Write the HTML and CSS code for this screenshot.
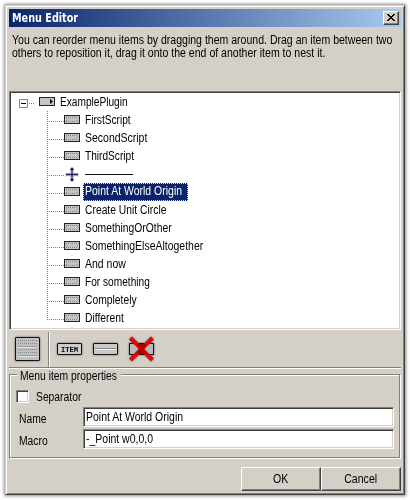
FILE: index.html
```
<!DOCTYPE html>
<html lang="en">
<head>
<meta charset="utf-8">
<title>Menu Editor</title>
<link rel="stylesheet" href="styles.css">
</head>
<body>
<svg class="defs" width="0" height="0" aria-hidden="true">
  <symbol id="item" viewBox="0 0 16 9"><rect x=".5" y=".5" width="15" height="8" fill="#c4c4c4" stroke="#222"/><path d="M2 2.5H14M2 6.5H14" stroke="#858585" stroke-dasharray="1 1"/><path d="M2.5 3V6M13.5 3V6" stroke="#999" stroke-dasharray="1 1"/></symbol>
</svg>
<main class="window">
  <header class="titlebar">
    <h1>Menu Editor</h1>
    <button class="close" aria-label="Close"><svg width="8" height="7" viewBox="0 0 8 7" shape-rendering="crispEdges"><path d="M0 0h2v1h1v1h2V1h1V0h2v1H7v1H6v1H5v1h1v1h1v1h1v1H6V6H5V5H3v1H2v1H0V6h1V5h1V4h1V3H2V2H1V1H0z"/></svg></button>
  </header>
  <div class="intro"><p class="text line1">You can reorder menu items by dragging them around. Drag an item between two</p><p class="text line2">others to reposition it, drag it onto the end of another item to nest it.</p></div>
  <section class="tree">
    <div class="root"><svg class="expander" width="9" height="9"><path d="M.5.5h8v8h-8z" fill="#fff" stroke="#808080"/><path d="M2 4.5h5" stroke="#000"/></svg><span class="stub"></span><svg class="icon" width="16" height="9"><rect x=".5" y=".5" width="15" height="8" fill="#c4c4c4" stroke="#222"/><path d="M11 2l3 2.5L11 7z"/></svg><span class="label"><span class="text tight">ExamplePlugin</span></span></div>
    <ul>
      <li><svg class="icon" width="16" height="9"><use href="#item"/></svg><span class="label"><span class="text tight">FirstScript</span></span></li>
      <li><svg class="icon" width="16" height="9"><use href="#item"/></svg><span class="label"><span class="text wide">SecondScript</span></span></li>
      <li><svg class="icon" width="16" height="9"><use href="#item"/></svg><span class="label"><span class="text tight">ThirdScript</span></span></li>
      <li><svg class="icon" width="16" height="16"><path d="M1 8.500h14M8 2v13" stroke="#b8b8ef" stroke-width="4" opacity=".55"/><path d="M2 8.500h12" stroke="#14144c" stroke-width="1.500"/><path d="M8 2v13" stroke="#14144c" stroke-width="1.200"/><path d="M8 1L6 4h4zM8 16l-2-3h4z" fill="#14144c"/></svg><span class="rule"></span></li>
      <li><svg class="icon" width="16" height="9"><use href="#item"/></svg><span class="label selected"><span class="text wide">Point At World Origin</span></span></li>
      <li><svg class="icon" width="16" height="9"><use href="#item"/></svg><span class="label"><span class="text">Create Unit Circle</span></span></li>
      <li><svg class="icon" width="16" height="9"><use href="#item"/></svg><span class="label"><span class="text">SomethingOrOther</span></span></li>
      <li><svg class="icon" width="16" height="9"><use href="#item"/></svg><span class="label"><span class="text wide">SomethingElseAltogether</span></span></li>
      <li><svg class="icon" width="16" height="9"><use href="#item"/></svg><span class="label"><span class="text wide">And now</span></span></li>
      <li><svg class="icon" width="16" height="9"><use href="#item"/></svg><span class="label"><span class="text tight">For something</span></span></li>
      <li><svg class="icon" width="16" height="9"><use href="#item"/></svg><span class="label"><span class="text">Completely</span></span></li>
      <li><svg class="icon" width="16" height="9"><use href="#item"/></svg><span class="label"><span class="text">Different</span></span></li>
    </ul>
  </section>
  <nav class="toolbar">
    <svg class="tool" width="25" height="24"><rect x=".5" y=".5" width="24" height="23" rx=".5" fill="#c0c0c0" stroke="#111"/><path d="M3 3.500h19M3 6.500h19M3 12.500h19M3 15.500h19" stroke="#888" stroke-dasharray="1 1"/><path d="M3 10.500h19M3 19.500h19" stroke="#e4e4e4"/><path d="M3 9.500h19M3 18.500h19" stroke="#999"/></svg>
    <span class="divider"></span>
    <svg class="tool" width="25" height="12"><rect x=".5" y=".5" width="24" height="11" rx=".5" fill="#ccc" stroke="#111"/><text x="4" y="8.500" textLength="17" lengthAdjust="spacingAndGlyphs" class="item-text">ITEM</text></svg>
    <svg class="tool" width="25" height="12"><rect x=".5" y=".5" width="24" height="11" rx=".5" fill="#c8c8c8" stroke="#111"/><path d="M2 5.500h21" stroke="#888"/><path d="M2 6.500h21" stroke="#eee"/></svg>
    <svg class="tool" width="27" height="26"><rect x="1.500" y="7.500" width="24" height="11" fill="#b8b8b8" stroke="#111"/><path d="M2.500 2L24.500 24M24.500 2L2.500 24" stroke="#e00909" stroke-width="4"/><path d="M8 8h11l-3 5 3 5H8l3-5z" fill="#b50000"/></svg>
  </nav>
  <fieldset>
    <legend><span class="text">Menu item properties</span></legend>
    <label class="check"><span class="box"></span><span class="text">Separator</span></label>
    <div class="field"><label><span class="text">Name</span></label><div class="input"><span class="text wide">Point At World Origin</span></div></div>
    <div class="field"><label><span class="text">Macro</span></label><div class="input"><span class="text wide">-_Point w0,0,0</span></div></div>
  </fieldset>
  <footer><button><span class="text centered">OK</span></button><button><span class="text centered">Cancel</span></button></footer>
</main>
</body>
</html>
```
FILE: styles.css
```
* { box-sizing: border-box; }
body { margin: 0; padding: 5px; height: 500px; overflow: hidden; background: #fff; color: #000; font: 12px/14px "Liberation Sans", Arial, sans-serif; }
.defs { position: absolute; }
h1, p, ul { margin: 0; padding: 0; }
svg { display: block; flex: none; }
.text { display: inline-block; white-space: nowrap; transform: scaleX(.86); transform-origin: 0 50%; }
.tight { transform: scaleX(.845); }
.wide { transform: scaleX(.873); }
.centered { transform: scaleX(.88); transform-origin: 50% 50%; }
.window { width: 400px; height: 490px; padding: 3px; background: #d4d0c8; border: 1px solid; border-color: #d4d0c8 #404040 #404040 #d4d0c8; box-shadow: inset 1px 1px #fff, inset -1px -1px #808080, 0 0 3px 1px #888; display: flex; flex-direction: column; }
.titlebar { height: 18px; flex: none; display: flex; align-items: center; justify-content: space-between; padding: 0 2px 0 3px; background: linear-gradient(90deg, #0a246a, #a6caf0); color: #fff; }
h1 { font: bold 12px/16px "DejaVu Sans", sans-serif; transform: scaleX(.805); transform-origin: 0 50%; }
button { font: inherit; color: #000; padding: 0; background: #d4d0c8; border: 1px solid; border-color: #fff #404040 #404040 #fff; box-shadow: inset -1px -1px #808080; display: flex; align-items: center; justify-content: center; }
.close { width: 16px; height: 14px; padding: 0 1px 1px 0; }
.intro { height: 64px; flex: none; padding: 7px 3px; line-height: 13px; }
.intro .text { display: block; width: max-content; transform: scaleX(.878); }
.tree { height: 239px; flex: none; background: #fff; border: 1px solid; border-color: #808080 #fff #fff #808080; box-shadow: inset 1px 1px #404040, inset -1px -1px #d4d0c8; padding: 1px; white-space: nowrap; }
.root, li { height: 18px; display: flex; align-items: center; }
.root { padding-left: 8px; }
.expander { margin-top: 2px; }
.stub { width: 5px; margin: 2px 5px 0 1px; border-top: 1px dotted #808080; }
.icon { margin-right: 3px; margin-bottom: 1px; }
.label { height: 16px; line-height: 16px; padding: 0 2px; }
ul { list-style: none; margin-left: 36px; background: repeating-linear-gradient(#808080 0 1px, transparent 1px 2px) 0 0 / 1px 209px no-repeat; }
li::before { content: ""; width: 17px; height: 1px; margin-top: 2px; background: repeating-linear-gradient(90deg, #808080 0 1px, transparent 1px 2px); }
.rule { width: 48px; height: 1px; background: #111; margin-left: 2px; }
.selected { width: 105px; height: 18px; line-height: 17px; background: #0a246a; color: #fff; outline: 1px dotted #f5db95; outline-offset: -1px; }
.toolbar { height: 40px; flex: none; display: flex; align-items: center; margin-top: -1px; padding: 0 6px; border-bottom: 1px solid #fff; box-shadow: inset 0 -1px #808080; }
.tool { filter: drop-shadow(0 0 1px #666); overflow: visible; }
.divider { width: 2px; height: 35px; margin: 2px 7px 0 8px; border-left: 1px solid #808080; border-right: 1px solid #fff; }
.tool + .tool { margin-left: 11px; }
.tool:last-child { margin-left: 10px; }
.item-text { font: bold 8px "Liberation Mono", monospace; }
fieldset { position: relative; height: 84px; flex: none; margin: 5px 1px 0 0; padding: 0 5px; border: 1px solid #808080; box-shadow: 1px 1px #fff, inset 1px 1px #fff; min-width: 0; }
legend { position: absolute; top: -6px; left: 7px; width: 104px; background: #d4d0c8; padding: 0 3px; white-space: nowrap; }
.check { display: flex; align-items: center; height: 13px; margin: 15px 0 4px 1px; }
.box { width: 13px; height: 13px; margin-right: 7px; background: #fff; border: 1px solid; border-color: #808080 #fff #fff #808080; box-shadow: inset 1px 1px #404040, inset -1px -1px #d4d0c8; }
.field { display: flex; height: 20px; margin-bottom: 2px; }
.field label { width: 68px; padding: 5px 0 0 4px; }
.input { width: 312px; background: #fff; border: 1px solid; border-color: #808080 #fff #fff #808080; box-shadow: inset 1px 1px #404040, inset -1px -1px #d4d0c8; padding: 2px; white-space: nowrap; }
footer { display: flex; justify-content: flex-end; margin-top: auto; }
footer button { width: 80px; height: 24px; }
```
